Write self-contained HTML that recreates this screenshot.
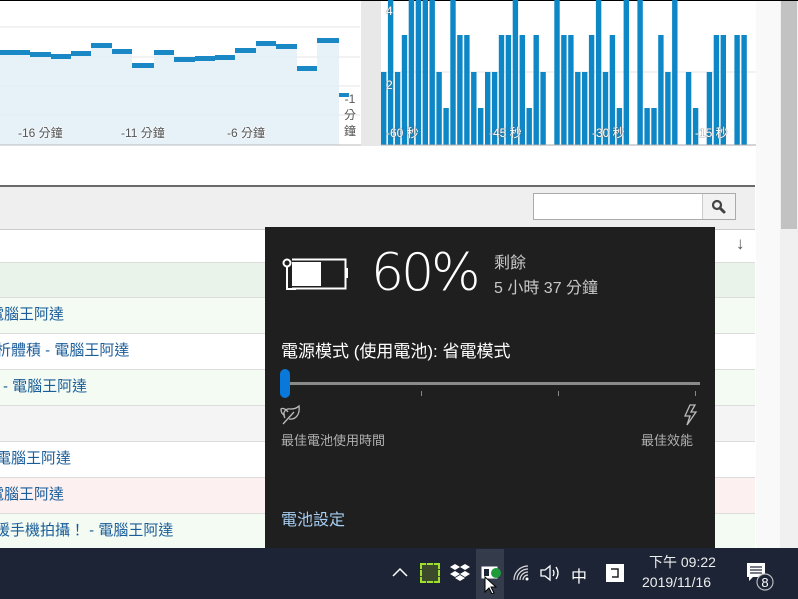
<!DOCTYPE html>
<html><head><meta charset="utf-8"><style>
*{margin:0;padding:0;box-sizing:border-box}
body{width:798px;height:599px;overflow:hidden;background:#fff;position:relative;font-family:"Liberation Sans","Noto Sans CJK TC",sans-serif}
.a{position:absolute}
.row{position:absolute;left:0;width:755px;height:36px;border-top:1px solid #dcdcdc;color:#1b5d99;font-size:15px;line-height:34px;white-space:nowrap;overflow:hidden}
.lbl{position:absolute;font-size:12px;color:#555;text-shadow:0 0 2px #fff,0 0 2px #fff;white-space:nowrap}
.wl{position:absolute;font-size:12px;color:#fff;text-shadow:0 0 1px #666,0 0 1px #666;white-space:nowrap;top:124px}
.tb{color:#fff;position:absolute;font-size:15px}
</style></head><body>
<div class="a" style="left:0;top:0;width:798px;height:1px;background:#000"></div>
<svg class="a" style="left:0;top:0" width="362" height="146">
<line x1="0" y1="27" x2="360" y2="27" stroke="#e4e4e4"/>
<line x1="0" y1="57" x2="360" y2="57" stroke="#e4e4e4"/>
<line x1="0" y1="86" x2="360" y2="86" stroke="#e4e4e4"/>
<line x1="0" y1="115" x2="360" y2="115" stroke="#e4e4e4"/>
<path d="M0 52H30V52H51V54H51V54H71V56H91V53H91V45H112V51H132V65H154V52H174V59H195V58H215V57H235V50H256V43H276V46H297V68H317V40H339V145H0Z" fill="#e3f0f7" opacity=".85"/>
<g fill="#1a88c4">
<rect x="0" y="50" width="10" height="5"/><rect x="10" y="50" width="20" height="5"/><rect x="30" y="52" width="21" height="5"/><rect x="51" y="54" width="20" height="5"/><rect x="71" y="51" width="20" height="5"/><rect x="91" y="43" width="21" height="5"/><rect x="112" y="49" width="20" height="5"/><rect x="132" y="63" width="22" height="5"/><rect x="154" y="50" width="20" height="5"/><rect x="174" y="57" width="21" height="5"/><rect x="195" y="56" width="20" height="5"/><rect x="215" y="55" width="20" height="5"/><rect x="235" y="48" width="21" height="5"/><rect x="256" y="41" width="20" height="5"/><rect x="276" y="44" width="21" height="5"/><rect x="297" y="66" width="20" height="5"/><rect x="317" y="38" width="22" height="5"/><rect x="339" y="93" width="10" height="4"/>
</g>
<line x1="0" y1="145" x2="362" y2="145" stroke="#bbb"/>
</svg>
<div class="lbl" style="left:18px;top:124px">-16 分鐘</div>
<div class="lbl" style="left:121px;top:124px">-11 分鐘</div>
<div class="lbl" style="left:227px;top:124px">-6 分鐘</div>
<div class="lbl" style="left:343px;top:91px;width:14px;line-height:16px;text-align:center">-1<br>分<br>鐘</div>
<div class="a" style="left:361px;top:1px;width:20px;height:145px;background:#e8e8e8"></div>
<svg class="a" style="left:381px;top:0" width="375" height="146">
<line x1="0" y1="72" x2="375" y2="72" stroke="#e4e4e4"/>
<g fill="#0e87c6">
<rect x="0.0" y="72" width="5.4" height="73"/><rect x="6.9" y="0" width="5.4" height="145"/><rect x="13.9" y="72" width="5.4" height="73"/><rect x="20.8" y="35" width="5.4" height="110"/><rect x="27.7" y="0" width="5.4" height="145"/><rect x="34.7" y="0" width="5.4" height="145"/><rect x="41.6" y="0" width="5.4" height="145"/><rect x="48.5" y="0" width="5.4" height="145"/><rect x="55.4" y="72" width="5.4" height="73"/><rect x="62.4" y="108" width="5.4" height="37"/><rect x="69.3" y="0" width="5.4" height="145"/><rect x="76.2" y="35" width="5.4" height="110"/><rect x="83.2" y="35" width="5.4" height="110"/><rect x="90.1" y="72" width="5.4" height="73"/><rect x="97.0" y="108" width="5.4" height="37"/><rect x="104.0" y="72" width="5.4" height="73"/><rect x="110.9" y="72" width="5.4" height="73"/><rect x="117.8" y="35" width="5.4" height="110"/><rect x="124.7" y="35" width="5.4" height="110"/><rect x="131.7" y="0" width="5.4" height="145"/><rect x="138.6" y="35" width="5.4" height="110"/><rect x="145.5" y="108" width="5.4" height="37"/><rect x="152.5" y="35" width="5.4" height="110"/><rect x="159.4" y="72" width="5.4" height="73"/><rect x="173.3" y="0" width="5.4" height="145"/><rect x="180.2" y="35" width="5.4" height="110"/><rect x="187.2" y="35" width="5.4" height="110"/><rect x="194.1" y="72" width="5.4" height="73"/><rect x="201.0" y="72" width="5.4" height="73"/><rect x="207.9" y="35" width="5.4" height="110"/><rect x="214.9" y="0" width="5.4" height="145"/><rect x="221.8" y="72" width="5.4" height="73"/><rect x="228.7" y="35" width="5.4" height="110"/><rect x="235.7" y="108" width="5.4" height="37"/><rect x="242.6" y="0" width="5.4" height="145"/><rect x="256.4" y="0" width="5.4" height="145"/><rect x="263.4" y="108" width="5.4" height="37"/><rect x="270.3" y="108" width="5.4" height="37"/><rect x="277.2" y="35" width="5.4" height="110"/><rect x="284.2" y="72" width="5.4" height="73"/><rect x="291.1" y="0" width="5.4" height="145"/><rect x="304.9" y="72" width="5.4" height="73"/><rect x="311.9" y="108" width="5.4" height="37"/><rect x="325.7" y="72" width="5.4" height="73"/><rect x="332.7" y="35" width="5.4" height="110"/><rect x="339.6" y="35" width="5.4" height="110"/><rect x="353.4" y="35" width="5.4" height="110"/><rect x="360.4" y="35" width="5.4" height="110"/>
</g>
<line x1="0" y1="145" x2="375" y2="145" stroke="#aaa"/>
</svg>
<div class="wl" style="left:386px;top:4px">4</div>
<div class="wl" style="left:386px;top:78px">2</div>
<div class="wl" style="left:386px">-60 秒</div>
<div class="wl" style="left:489px">-45 秒</div>
<div class="wl" style="left:592px">-30 秒</div>
<div class="wl" style="left:695px">-15 秒</div>
<div class="a" style="left:756px;top:1px;width:24px;height:547px;background:#f9f9f9"></div>
<div class="a" style="left:780px;top:1px;width:18px;height:547px;background:#f0f0f0"></div>
<div class="a" style="left:781px;top:1px;width:16px;height:228px;background:#c2c2c2"></div>
<div class="a" style="left:0;top:185px;width:755px;height:2px;background:#6a6a6a"></div>
<div class="a" style="left:0;top:187px;width:755px;height:42px;background:#efefef"></div>
<div class="a" style="left:533px;top:193px;width:203px;height:27px;background:#fff;border:1px solid #aaa"></div>
<div class="a" style="left:702px;top:194px;width:33px;height:25px;background:#f2f2f2;border-left:1px solid #ccc"></div>
<svg class="a" style="left:710px;top:198px" width="18" height="18"><circle cx="7" cy="7" r="4" fill="none" stroke="#444" stroke-width="2.2"/><line x1="10" y1="10" x2="14" y2="14" stroke="#444" stroke-width="3" stroke-linecap="round"/></svg>
<div class="a" style="left:0;top:229px;width:755px;height:33px;background:#fff;border-top:1px solid #ccc"></div>
<div class="a" style="left:736px;top:234px;font-size:17px;color:#555;font-weight:bold">↓</div>
<div class="row" style="top:262px;background:#eaf3ea"></div>
<div class="row" style="top:297px;background:#f3fbf3;text-indent:-11px">電腦王阿達</div>
<div class="row" style="top:333px;background:#fff;text-indent:-19px">分析體積 - 電腦王阿達</div>
<div class="row" style="top:369px;background:#f3fbf3;text-indent:3px">- 電腦王阿達</div>
<div class="row" style="top:405px;background:#f4f4f4"></div>
<div class="row" style="top:441px;background:#fff;text-indent:-4px">電腦王阿達</div>
<div class="row" style="top:477px;background:#fcf0f0;text-indent:-11px">電腦王阿達</div>
<div class="row" style="top:513px;background:#f3fbf3;text-indent:-5px">援手機拍攝！ - 電腦王阿達</div>
<div class="a" style="left:265px;top:227px;width:450px;height:321px;background:#1f1f1f"></div>
<svg class="a" style="left:280px;top:255px" width="70" height="38">
<rect x="6.5" y="4.5" width="59" height="29" fill="none" stroke="#fff" stroke-width="2"/>
<rect x="65" y="13" width="3" height="10" fill="#fff"/>
<rect x="9" y="7" width="32" height="24" fill="#fff"/>
<rect x="1" y="1" width="11" height="36" fill="#1f1f1f"/>
<circle cx="7" cy="8" r="3.5" fill="none" stroke="#fff" stroke-width="2"/>
<line x1="7" y1="12" x2="7" y2="35" stroke="#fff" stroke-width="2"/>
<line x1="7" y1="34" x2="16" y2="34" stroke="#fff" stroke-width="2"/>
</svg>
<div class="a" style="left:371px;top:243px;font-family:'DejaVu Sans','Liberation Sans',sans-serif;font-weight:200;font-size:52px;color:#fff;letter-spacing:-3px">60%</div>
<div class="a" style="left:494px;top:249px;font-size:16px;color:#c8c8c8">剩餘</div>
<div class="a" style="left:494px;top:274px;font-size:16px;color:#c8c8c8">5 小時 37 分鐘</div>
<div class="a" style="left:281px;top:337px;font-size:17px;color:#fff">電源模式 (使用電池): 省電模式</div>
<div class="a" style="left:285px;top:382px;width:415px;height:3px;background:#8a8a8a"></div>
<div class="a" style="left:421px;top:391px;width:1px;height:5px;background:#888"></div>
<div class="a" style="left:558px;top:391px;width:1px;height:5px;background:#888"></div>
<div class="a" style="left:695px;top:391px;width:1px;height:5px;background:#888"></div>
<div class="a" style="left:280px;top:369px;width:10px;height:29px;border-radius:5px;background:#0a78d8"></div>
<svg class="a" style="left:280px;top:404px" width="22" height="22"><path d="M3 20L14 8M5 14C2 9 5 4 11 5C14 5 17 4 19 2C20 9 17 16 9 15M8 8C5 4 2 4 1 5C1 9 3 11 5 11" fill="none" stroke="#bbb" stroke-width="1.3"/></svg>
<svg class="a" style="left:681px;top:404px" width="20" height="22"><path d="M9 1L4 12H9L6 21L15 8H10L14 1Z" fill="none" stroke="#bbb" stroke-width="1.3"/></svg>
<div class="a" style="left:281px;top:430px;font-size:13px;color:#b0b0b0">最佳電池使用時間</div>
<div class="a" style="left:641px;top:430px;font-size:13px;color:#b0b0b0">最佳效能</div>
<div class="a" style="left:281px;top:506px;font-size:16px;color:#a6cff3">電池設定</div>
<div class="a" style="left:0;top:548px;width:798px;height:51px;background:#1c2435"></div>
<div class="a" style="left:476px;top:549px;width:28px;height:50px;background:#343c4c"></div>
<svg class="a" style="left:392px;top:566px" width="16" height="12"><path d="M1 10L8 3L15 10" fill="none" stroke="#fff" stroke-width="1.5"/></svg>
<div class="a" style="left:420px;top:563px;width:20px;height:20px;background:#3a4a2a;border:2px dashed #9ee02a"></div>
<svg class="a" style="left:450px;top:563px" width="20" height="18"><g fill="#fff"><path d="M5 1L10 4L5 7L0 4Z"/><path d="M15 1L20 4L15 7L10 4Z"/><path d="M5 8L10 11L5 14L0 11Z"/><path d="M15 8L20 11L15 14L10 11Z"/><path d="M5 15L10 12L15 15L10 18Z"/></g></svg>
<svg class="a" style="left:481px;top:564px" width="22" height="30"><rect x="1" y="3" width="15" height="11" fill="#fff" stroke="#fff"/><rect x="3" y="5" width="5" height="7" fill="#1c2435"/><circle cx="15" cy="9" r="5" fill="#1f9b3b"/><path d="M4 13V28L8 24L11 30L13 29L10 23H15Z" fill="#fff" stroke="#000" stroke-width="1"/></svg>
<svg class="a" style="left:512px;top:564px" width="20" height="18"><g fill="none" stroke="#ddd" stroke-width="1.2"><path d="M2 16A14 14 0 0 1 16 2"/><path d="M5 16A11 11 0 0 1 16 5" /><path d="M8 16A8 8 0 0 1 16 8"/><path d="M11 16A5 5 0 0 1 16 11"/></g><circle cx="15" cy="15" r="1.5" fill="#fff"/></svg>
<svg class="a" style="left:539px;top:564px" width="22" height="18"><path d="M2 6H6L11 2V16L6 12H2Z" fill="none" stroke="#fff" stroke-width="1.3"/><path d="M14 6Q16 9 14 12M17 3Q21 9 17 15" fill="none" stroke="#fff" stroke-width="1.3"/></svg>
<div class="tb" style="left:571px;top:563px;font-size:16px">中</div>
<div class="a" style="left:606px;top:564px;width:18px;height:18px;background:#fff"></div>
<svg class="a" style="left:606px;top:564px" width="18" height="18"><path d="M5 5H12V13H6" fill="none" stroke="#222" stroke-width="1.5"/></svg>
<div class="tb" style="left:649px;top:552px;font-size:14px;color:#eee">下午 09:22</div>
<div class="tb" style="left:642px;top:574px;font-size:14px;color:#eee">2019/11/16</div>
<svg class="a" style="left:745px;top:561px" width="40" height="36"><path d="M2 2H20V16H8L4 20V16H2Z" fill="#fff"/><g stroke="#1c2435" stroke-width="1.2"><line x1="5" y1="6" x2="17" y2="6"/><line x1="5" y1="9" x2="17" y2="9"/><line x1="5" y1="12" x2="17" y2="12"/></g><circle cx="20" cy="21" r="8" fill="#1c2435" stroke="#bbb" stroke-width="1.2"/><text x="20" y="26" font-size="13" fill="#fff" text-anchor="middle" font-family="Liberation Sans, sans-serif">8</text></svg>
</body></html>
